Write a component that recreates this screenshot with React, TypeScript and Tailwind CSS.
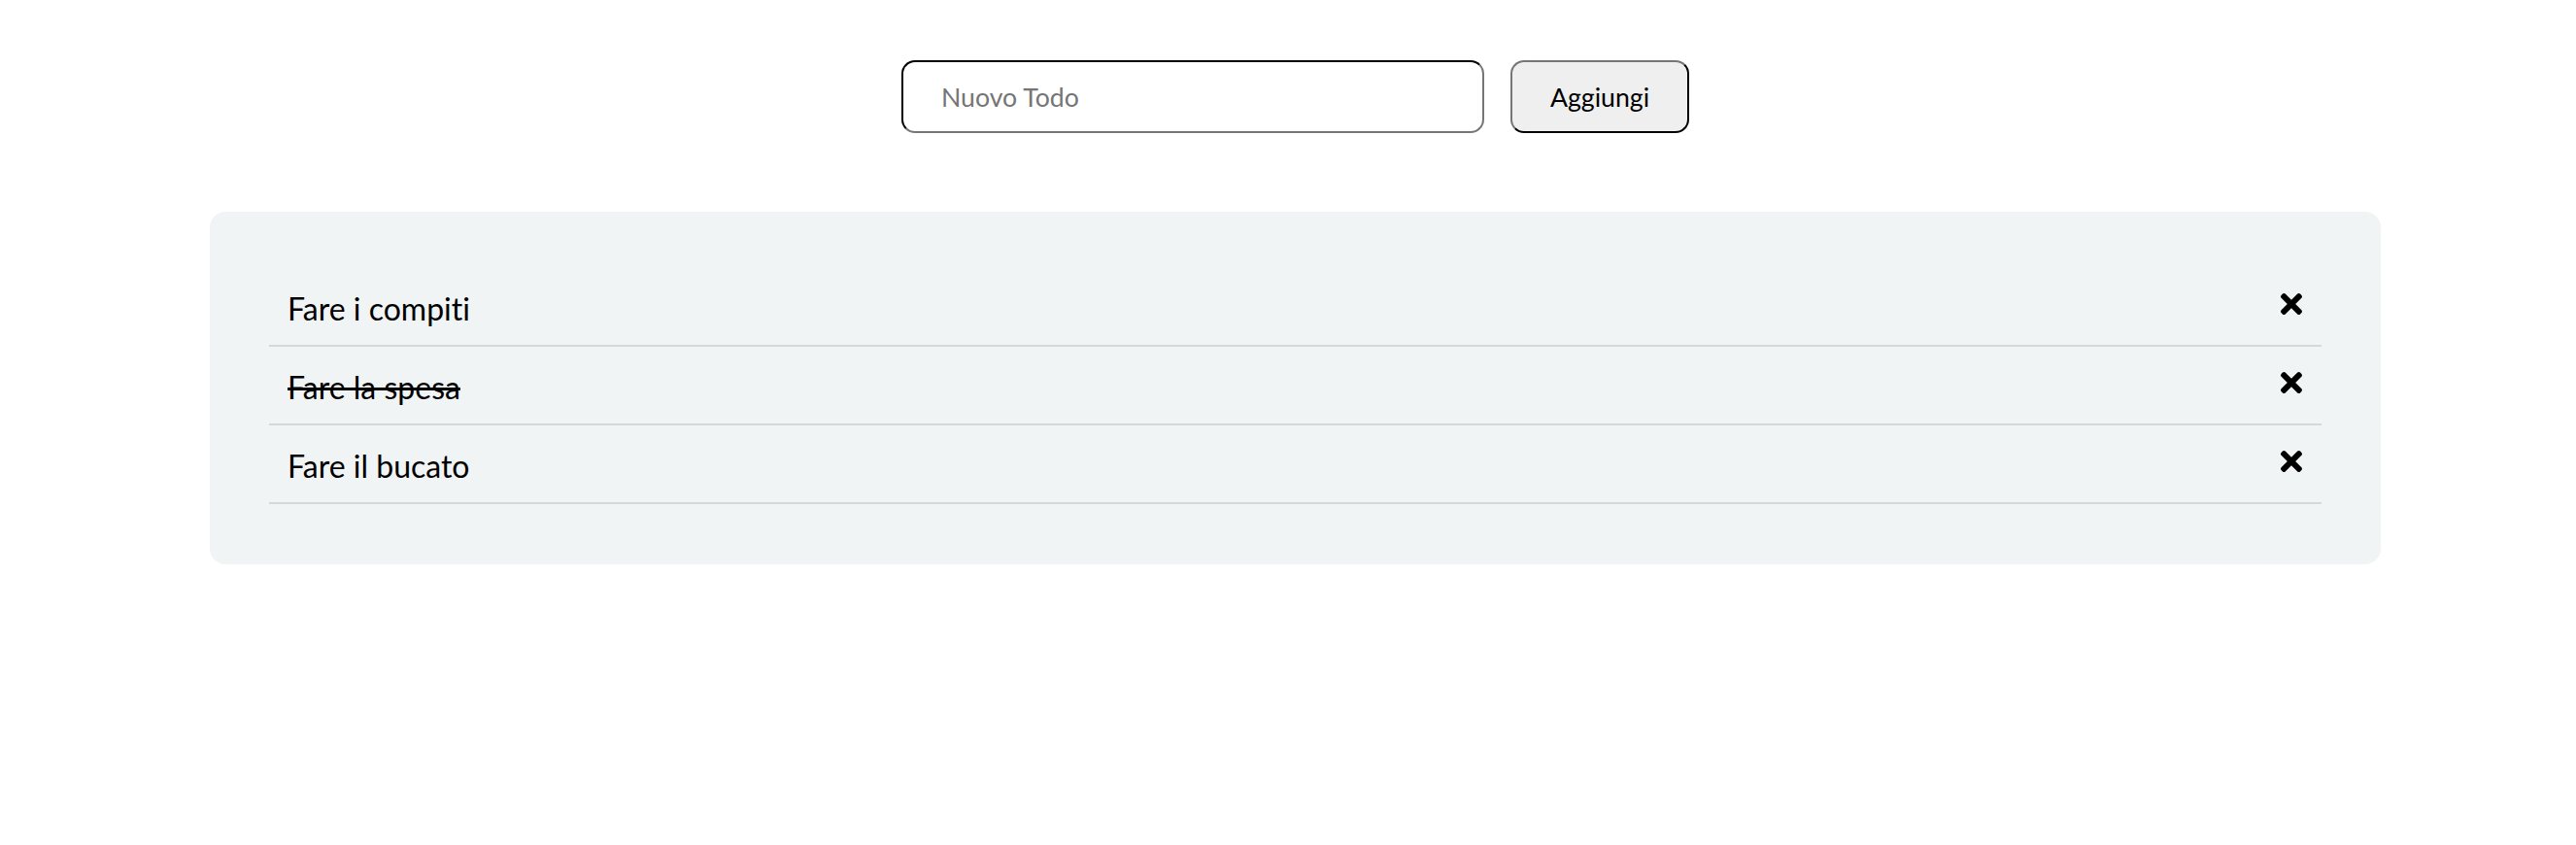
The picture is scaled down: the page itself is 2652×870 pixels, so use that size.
import React from "react";
import { FaTimes } from "react-icons/fa";

const todos = [
  { text: "Fare i compiti", done: false },
  { text: "Fare la spesa", done: true },
  { text: "Fare il bucato", done: false },
];

export default function App() {
  return (
    <div
      className="min-h-[870px] bg-white pl-[15px] pt-[62px] text-black [font-variant-ligatures:none]"
      style={{ fontFamily: "Lato, 'Noto Sans', sans-serif" }}
    >
      <div className="flex justify-center gap-[27px]">
        <input
          type="text"
          placeholder="Nuovo Todo"
          className="h-[75px] w-[600px] rounded-[14px] border-2 border-t-black border-l-black border-r-[#767676] border-b-[#767676] bg-white pl-[39px] text-[26.67px] text-black outline-none placeholder:text-[#757575]"
        />
        <button className="h-[75px] w-[184px] rounded-[14px] border-2 border-t-[#767676] border-l-[#767676] border-r-black border-b-black bg-[#efefef] text-[26.67px] text-black">
          Aggiungi
        </button>
      </div>
      <div className="mx-auto mt-[81px] w-[2235px] rounded-[16px] bg-[#f1f4f5] px-[61px] pt-[58px] pb-[62px]">
        <ul>
          {todos.map((t) => (
            <li
              key={t.text}
              className="flex h-[81px] items-center justify-between border-b-2 border-[#d4d8dc] pl-[19px] pr-[15px]"
            >
              <span
                className={
                  "pt-[5px] text-[32px] leading-[1.2] " +
                  (t.done ? "line-through" : "")
                }
              >
                {t.text}
              </span>
              <FaTimes className="relative -top-[3px] text-[32px] text-black" />
            </li>
          ))}
        </ul>
      </div>
    </div>
  );
}
